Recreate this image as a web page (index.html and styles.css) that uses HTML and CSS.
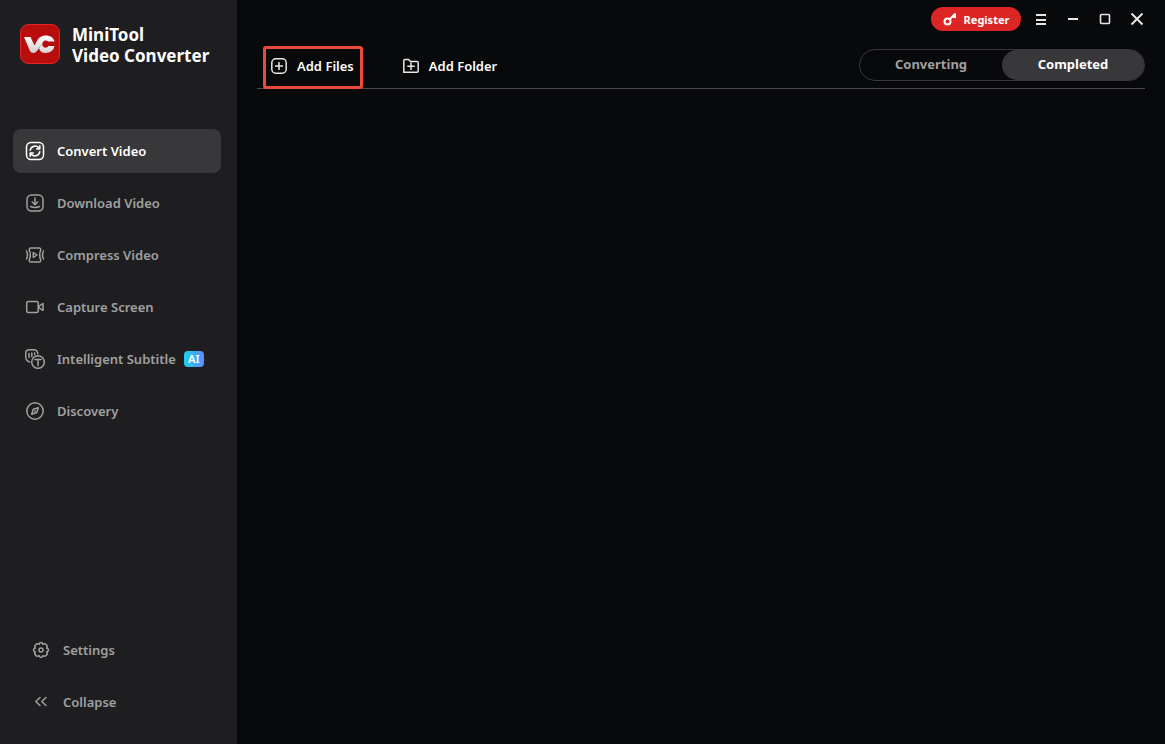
FILE: index.html
```html
<!DOCTYPE html>
<html lang="en">
<head>
  <meta charset="UTF-8">
  <meta name="viewport" content="width=device-width, initial-scale=1.0">
  <title>MiniTool Video Converter</title>
  <link rel="stylesheet" href="styles.css">
</head>
<body>
  <div class="app">
    <aside class="sidebar">
      <div class="brand">
        <svg class="logo" width="40" height="40" viewBox="0 0 40 40">
          <defs>
            <linearGradient id="silver" x1="0" y1="0" x2="0" y2="1">
              <stop offset="0" stop-color="#fff"/>
              <stop offset="1" stop-color="#cfcfcf"/>
            </linearGradient>
          </defs>
          <rect x="0.5" y="0.5" width="39" height="39" rx="8" fill="#b90c0c" stroke="#e3262a"/>
          <path d="M4 13H10.500L14.500 21.500L17.500 16Q20 11.500 26 11.500C30 11.500 33.500 13.500 34.500 17.500H28.500Q25 15.500 23 18L17 27Q15.500 29 13 29Q11 29 10 27Z" fill="url(#silver)"/>
          <path d="M22.500 18.500Q21.500 23.500 25.500 23.700Q27.500 23.700 28.500 22H34.500Q33 29 25.500 29Q20.500 29 19 24.500Z" fill="url(#silver)"/>
        </svg>
        <h1>MiniTool<br>Video Converter</h1>
      </div>

      <nav class="menu">
        <a href="#convert" class="item active">
          <svg class="icon" width="20" height="20" viewBox="0 0 20 20">
            <rect x="1.500" y="1.500" width="17" height="17" rx="4.500"/>
            <path d="M5.200 9.300A4.900 4.900 0 0 1 14.300 7.500M14.800 4.800V8H11.700M14.800 10.700A4.900 4.900 0 0 1 5.700 12.500M5.200 15.200V12H8.300"/>
          </svg>
          <span>Convert Video</span>
        </a>
        <a href="#download" class="item">
          <svg class="icon" width="20" height="20" viewBox="0 0 20 20">
            <rect x="2" y="2" width="16" height="16" rx="4.500"/>
            <path d="M10 5V11.500M7.300 9L10 11.700L12.700 9M5.500 13.500Q10 15.500 14.500 13.500"/>
          </svg>
          <span>Download Video</span>
        </a>
        <a href="#compress" class="item">
          <svg class="icon" width="20" height="20" viewBox="0 0 20 20">
            <path d="M6 3H14Q16 3 15.700 5Q13.700 10 15.700 15Q16 17 14 17H6Q4 17 4.300 15Q6.300 10 4.300 5Q4 3 6 3ZM8.300 7.500V12.500L12 10Z"/>
            <path d="M1.500 6Q3.500 10 1.500 14M18.500 6Q16.500 10 18.500 14"/>
          </svg>
          <span>Compress Video</span>
        </a>
        <a href="#capture" class="item">
          <svg class="icon" width="20" height="20" viewBox="0 0 20 20">
            <rect x="1.700" y="4.500" width="11.500" height="11" rx="1.500"/>
            <path d="M18 6.500V13.500L14 10.800V9.200Z"/>
          </svg>
          <span>Capture Screen</span>
        </a>
        <a href="#subtitle" class="item">
          <svg class="icon" width="20" height="20" viewBox="0 0 20 20">
            <path d="M4.500 13Q0.700 11.500 0.700 8V4.500Q0.700 0.700 4.500 0.700H8.500Q12.500 0.700 12.800 4.800M4 4.500V8.500M6.800 4V7.500M9.600 4V5.500"/>
            <circle cx="13" cy="13" r="6.300"/>
            <path d="M9.800 10.500H16.200M13 10.500V16.500"/>
          </svg>
          <span>Intelligent Subtitle</span>
          <span class="badge">AI</span>
        </a>
        <a href="#discovery" class="item">
          <svg class="icon" width="20" height="20" viewBox="0 0 20 20">
            <circle cx="10" cy="10" r="8.200"/>
            <path d="M13.300 6.700L11.800 11.500L6.700 13.300L8.300 8.300ZM10 9.800V10.200"/>
          </svg>
          <span>Discovery</span>
        </a>
      </nav>

      <div class="menu bottom">
        <button type="button" class="item">
          <svg class="icon" width="18" height="18" viewBox="0 0 18 18">
            <path d="M9 1.500Q10.500 1.500 10.800 3.300Q12.800 2 14.300 3.700Q16 5.200 14.700 7.200Q16.500 7.500 16.500 9Q16.500 10.500 14.700 10.800Q16 12.800 14.300 14.300Q12.800 16 10.800 14.700Q10.500 16.500 9 16.500Q7.500 16.500 7.200 14.700Q5.200 16 3.700 14.300Q2 12.800 3.300 10.800Q1.500 10.500 1.500 9Q1.500 7.500 3.300 7.200Q2 5.200 3.700 3.700Q5.200 2 7.200 3.300Q7.500 1.500 9 1.500Z"/>
            <circle cx="9" cy="9" r="2"/>
          </svg>
          <span>Settings</span>
        </button>
        <button type="button" class="item">
          <svg class="icon" width="18" height="18" viewBox="0 0 18 18">
            <path d="M8 4.500L3.800 8.500L8 12.500M14 4.500L9.800 8.500L14 12.500"/>
          </svg>
          <span>Collapse</span>
        </button>
      </div>
    </aside>

    <main class="content">
      <header class="titlebar">
        <button type="button" class="register">
          <svg width="14" height="14" viewBox="0 0 14 14" fill="none" stroke="#fff" stroke-width="2">
            <circle cx="4.500" cy="9.500" r="3"/>
            <path d="M7 7L12.500 1.500M9.500 4.500L12 5V1.500"/>
          </svg>
          <span>Register</span>
        </button>
        <button type="button" class="win" aria-label="Menu">
          <svg width="16" height="16" viewBox="0 0 16 16"><path d="M3 4H13M3 9H13M3 13H13"/></svg>
        </button>
        <button type="button" class="win" aria-label="Minimize">
          <svg width="16" height="16" viewBox="0 0 16 16"><path d="M3 8H13"/></svg>
        </button>
        <button type="button" class="win" aria-label="Maximize">
          <svg width="16" height="16" viewBox="0 0 16 16"><rect x="3.500" y="3.500" width="9" height="9" rx="1" stroke-width="1.600"/></svg>
        </button>
        <button type="button" class="win" aria-label="Close">
          <svg width="16" height="16" viewBox="0 0 16 16"><path d="M2.500 2.500L13.500 13.500M13.500 2.500L2.500 13.500"/></svg>
        </button>
      </header>

      <div class="toolbar">
        <button type="button" class="tool highlight">
          <svg width="16" height="16" viewBox="0 0 16 16">
            <rect x="0.800" y="0.800" width="14.400" height="14.400" rx="4"/>
            <path d="M8 4V12M4 8H12"/>
          </svg>
          <span>Add Files</span>
        </button>
        <button type="button" class="tool">
          <svg width="16" height="16" viewBox="0 0 16 16">
            <path d="M0.800 14V2.500Q0.800 1.500 2 1.500H5.500L7.500 3.500H14Q15.200 3.500 15.200 4.500V13Q15.200 14.200 14 14.200H0.800Z"/>
            <path d="M8 4.500V12M4.300 8.300H11.700"/>
          </svg>
          <span>Add Folder</span>
        </button>
        <div class="tabs">
          <button type="button" class="tab">Converting</button>
          <button type="button" class="tab selected">Completed</button>
        </div>
      </div>
    </main>
  </div>
</body>
</html>
```
FILE: styles.css
```css
* {
  box-sizing: border-box;
}
body {
  margin: 0;
  background: #08090b;
  color: #fff;
  font-family: "Noto Sans", "Open Sans", sans-serif;
  font-size: 13px;
  font-weight: 600;
}
button {
  padding: 0;
  border: none;
  background: none;
  color: inherit;
  font: inherit;
  cursor: pointer;
}
svg {
  flex-shrink: 0;
}
.app {
  display: flex;
  min-height: 100vh;
}
.sidebar {
  display: flex;
  flex-direction: column;
  width: 237px;
  flex-shrink: 0;
  padding: 24px 16px 20px 13px;
  background: #1e1e20;
}
.brand {
  display: flex;
  gap: 12px;
  padding-left: 7px;
  margin-bottom: 63px;
}
h1 {
  margin: 0;
  font-size: 17px;
  line-height: 21px;
  font-weight: 700;
  white-space: nowrap;
}
.menu {
  display: flex;
  flex-direction: column;
  gap: 8px;
}
.item {
  display: flex;
  align-items: center;
  gap: 12px;
  height: 44px;
  padding: 0 12px;
  border-radius: 8px;
  color: #a0a0a1;
  text-decoration: none;
  white-space: nowrap;
}
.item:hover,
.item.active {
  background: #38383a;
  color: #fff;
}
.icon {
  fill: none;
  stroke: currentColor;
  stroke-width: 1.5;
  stroke-linecap: round;
  stroke-linejoin: round;
}
.badge {
  width: 20px;
  margin-left: -4px;
  border-radius: 4px;
  background: linear-gradient(90deg, #22d0ea, #5b8cff);
  color: #fff;
  font-size: 11px;
  line-height: 16px;
  text-align: center;
}
.bottom {
  margin-top: auto;
}
.bottom .item {
  gap: 13px;
  padding-left: 19px;
}
.content {
  flex: 1;
  padding: 0 20px;
}
.titlebar {
  display: flex;
  justify-content: flex-end;
  align-items: center;
  gap: 16px;
  height: 38px;
}
.register {
  display: flex;
  align-items: center;
  justify-content: center;
  gap: 7px;
  width: 90px;
  height: 24px;
  margin-right: -4px;
  border-radius: 12px;
  background: #dc2626;
  font-size: 11px;
  font-weight: 700;
}
.win {
  display: flex;
}
.win svg {
  fill: none;
  stroke: #e6e6e6;
  stroke-width: 2;
}
.toolbar {
  display: flex;
  align-items: flex-end;
  height: 51px;
  padding-left: 6px;
  border-bottom: 1px solid #4b4b4d;
}
.tool {
  display: flex;
  align-items: center;
  gap: 10px;
  height: 43px;
  padding: 0 6px 4px 5px;
  margin: 0 32px -1px 0;
  border: 3px solid transparent;
  border-radius: 3px;
  white-space: nowrap;
}
.tool svg {
  fill: none;
  stroke: #e6e6e6;
  stroke-width: 1.5;
}
.highlight {
  border-color: #ee4a3c;
}
.tabs {
  display: flex;
  width: 286px;
  height: 32px;
  margin: 0 0 7px auto;
  border: 1px solid #38383a;
  border-radius: 16px;
}
.tab {
  flex: 1;
  padding-bottom: 2px;
  color: #a0a0a1;
  font-weight: 700;
}
.tab.selected {
  border-radius: 16px;
  background: #38383a;
  color: #fff;
}
```
